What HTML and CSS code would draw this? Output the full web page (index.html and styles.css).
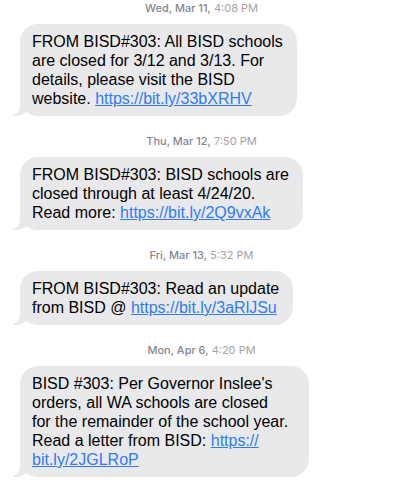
FILE: index.html
```html
<!DOCTYPE html>
<html>
<head>
<meta charset="utf-8">
<link rel="stylesheet" href="styles.css">
</head>
<body>
<div class="thread">
  <div class="stamp first"><b>Wed, Mar 11,</b> 4:08 PM</div>
  <div class="bubble">FROM BISD#303: All BISD schools<br>are closed for 3/12 and 3/13. For<br>details, please visit the BISD<br>website. <a class="link">https://bit.ly/33bXRHV</a></div>

  <div class="stamp"><b>Thu, Mar 12,</b> 7:50 PM</div>
  <div class="bubble">FROM BISD#303: BISD schools are<br>closed through at least 4/24/20.<br>Read more: <a class="link">https://bit.ly/2Q9vxAk</a></div>

  <div class="stamp"><b>Fri, Mar 13,</b> 5:32 PM</div>
  <div class="bubble">FROM BISD#303: Read an update<br>from BISD @ <a class="link">https://bit.ly/3aRlJSu</a></div>

  <div class="stamp"><b>Mon, Apr 6,</b> 4:20 PM</div>
  <div class="bubble wide">BISD #303: Per Governor Inslee's<br>orders, all WA schools are closed<br>for the remainder of the school year.<br>Read a letter from BISD: <a class="link">https://<br>bit.ly/2JGLRoP</a></div>
</div>
</body>
</html>
```

FILE: styles.css
```css
html, body {
  margin: 0;
  padding: 0;
  background: #ffffff;
}
.thread {
  display: flex;
  flex-direction: column;
  align-items: flex-start;
  padding-left: 20px;
  font-family: "Liberation Sans", Arial, sans-serif;
}
.stamp {
  align-self: stretch;
  text-align: center;
  font-family: Inter, "Liberation Sans", sans-serif;
  font-size: 11px;
  line-height: 14px;
  color: #a2a2a7;
  margin-top: 18px;
  padding-right: 17px;
}
.stamp.first {
  margin-top: 1px;
}
.stamp b {
  font-weight: 500;
  color: #86868b;
}
.bubble {
  position: relative;
  margin-top: 9px;
  background: #e9e9eb;
  color: #000;
  font-size: 16px;
  line-height: 19px;
  padding: 8px 14px 8px 12px;
  border-radius: 18px;
}
.bubble.wide {
  padding-right: 21px;
}
.bubble::before {
  content: "";
  position: absolute;
  bottom: 0;
  left: -7px;
  width: 18px;
  height: 20px;
  background: #e9e9eb;
  border-bottom-right-radius: 16px 14px;
}
.bubble::after {
  content: "";
  position: absolute;
  bottom: 0;
  left: -26px;
  width: 26px;
  height: 20px;
  background: #ffffff;
  border-bottom-right-radius: 10px;
}
.link {
  color: #2f7cf6;
  text-decoration: underline;
}
```
